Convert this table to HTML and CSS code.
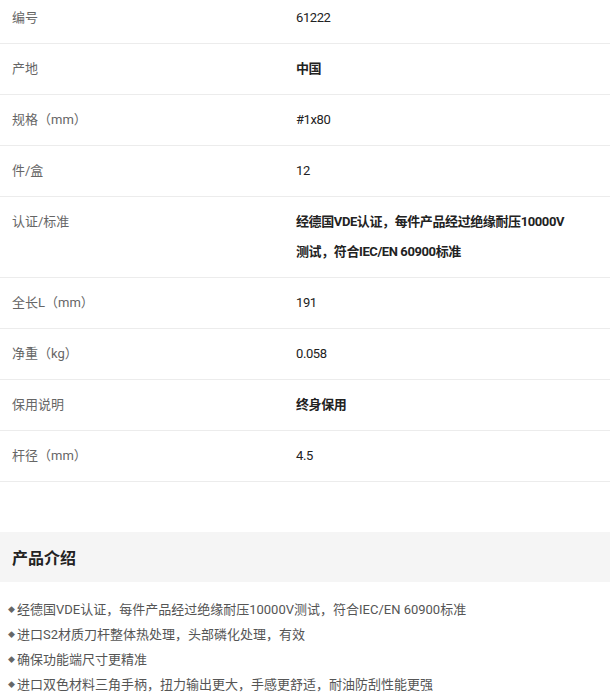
FILE: index.html
```html
<!DOCTYPE html>
<html lang="zh">
<head>
<meta charset="utf-8">
<link rel="stylesheet" href="styles.css">
</head>
<body>
<div class="specs">
  <div class="row"><div class="label">编号</div><div class="value">61222</div></div>
  <div class="row"><div class="label">产地</div><div class="value strong">中国</div></div>
  <div class="row"><div class="label">规格（mm）</div><div class="value">#1x80</div></div>
  <div class="row"><div class="label">件/盒</div><div class="value">12</div></div>
  <div class="row"><div class="label">认证/标准</div><div class="value strong">经德国VDE认证，每件产品经过绝缘耐压10000V测试，符合IEC/EN 60900标准</div></div>
  <div class="row"><div class="label">全长L（mm）</div><div class="value">191</div></div>
  <div class="row"><div class="label">净重（kg）</div><div class="value">0.058</div></div>
  <div class="row"><div class="label">保用说明</div><div class="value strong">终身保用</div></div>
  <div class="row"><div class="label">杆径（mm）</div><div class="value">4.5</div></div>
</div>
<div class="intro-head">产品介绍</div>
<ul class="intro">
  <li>经德国VDE认证，每件产品经过绝缘耐压10000V测试，符合IEC/EN 60900标准</li>
  <li>进口S2材质刀杆整体热处理，头部磷化处理，有效</li>
  <li>确保功能端尺寸更精准</li>
  <li>进口双色材料三角手柄，扭力输出更大，手感更舒适，耐油防刮性能更强</li>
</ul>
</body>
</html>
```

FILE: styles.css
```css
html, body {
  margin: 0;
  padding: 0;
  background: #fff;
}
body {
  font-family: "Roboto", "Noto Sans CJK SC", sans-serif;
  font-size: 13px;
  color: #333;
}
.specs {
  margin-top: -7px;
}
.row {
  display: grid;
  grid-template-columns: 296px 1fr;
  border-bottom: 1px solid #ececec;
  padding: 10px 0;
}
.label {
  padding-left: 12px;
  line-height: 30px;
  color: #666;
}
.value {
  line-height: 30px;
  color: #222;
  padding-right: 40px;
  letter-spacing: -0.4px;
}
.strong {
  font-weight: bold;
}
.intro-head {
  margin-top: 50px;
  background: #f5f5f5;
  height: 50px;
  line-height: 50px;
  padding-left: 12px;
  font-size: 16px;
  font-weight: bold;
  color: #222;
  font-family: "Noto Sans CJK SC", sans-serif;
}
.intro {
  list-style: none;
  margin: 15px 0 0;
  padding: 0 0 0 8px;
}
.intro li {
  height: 25px;
  line-height: 25px;
  color: #555;
}
.intro li::before {
  content: "◆";
  font-size: 7px;
  line-height: 1;
  color: #666;
  display: inline-block;
  width: 9px;
  vertical-align: middle;
}
```
